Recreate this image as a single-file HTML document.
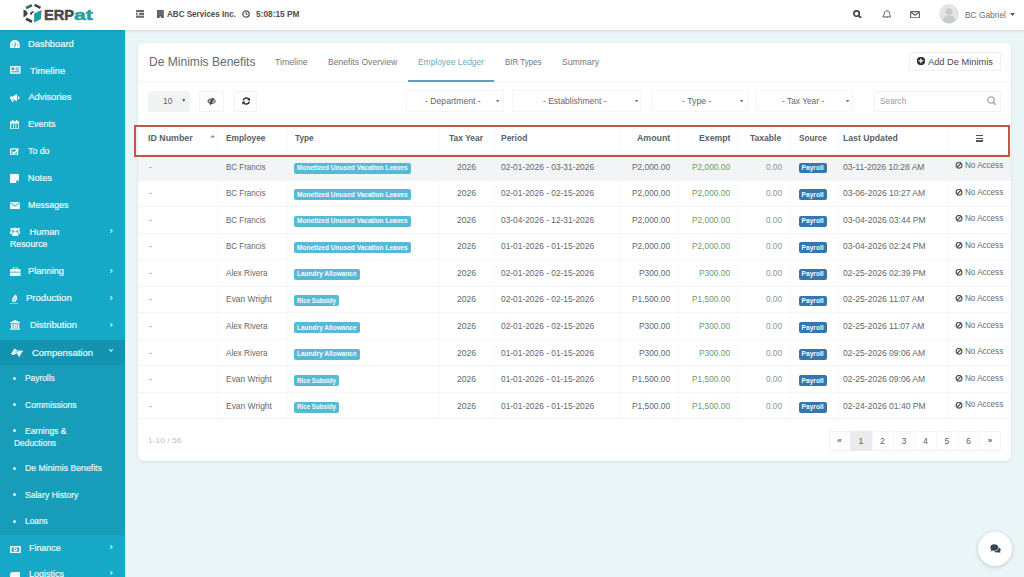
<!DOCTYPE html>
<html><head><meta charset="utf-8"><style>
html,body{margin:0;padding:0;}
body{width:1024px;height:577px;overflow:hidden;position:relative;background:#e9f5f7;font-family:"Liberation Sans",sans-serif;}
.t{position:absolute;white-space:nowrap;line-height:1;transform-origin:0 0;}
.b{position:absolute;}
</style></head><body>
<div class="b" style="left:0.00px;top:0.00px;width:1024.00px;height:30.00px;background:#fff"></div>
<div class="b" style="left:0.00px;top:30.00px;width:125.00px;height:547.00px;background:#16a9c7"></div>
<div class="b" style="left:0.00px;top:365.00px;width:125.00px;height:170.00px;background:#179dba"></div>
<div class="b" style="left:0.00px;top:340.00px;width:125.00px;height:25.00px;background:#1393b0"></div>
<div class="b" style="left:125.00px;top:30.00px;width:1.20px;height:547.00px;background:#cdeef5"></div>
<div class="t" style="left:28.40px;top:39.93px;font-size:9.30px;color:#eef9fb;transform:scaleX(1.0066);-webkit-text-stroke:0.2px #eef9fb;">Dashboard</div>
<div class="t" style="left:29.80px;top:66.93px;font-size:9.30px;color:#eef9fb;transform:scaleX(1.0142);-webkit-text-stroke:0.2px #eef9fb;">Timeline</div>
<div class="t" style="left:28.40px;top:93.43px;font-size:9.30px;color:#eef9fb;-webkit-text-stroke:0.2px #eef9fb;">Advisories</div>
<div class="t" style="left:28.40px;top:120.23px;font-size:9.30px;color:#eef9fb;transform:scaleX(0.9636);-webkit-text-stroke:0.2px #eef9fb;">Events</div>
<div class="t" style="left:28.40px;top:147.33px;font-size:9.30px;color:#eef9fb;transform:scaleX(0.9446);-webkit-text-stroke:0.2px #eef9fb;">To do</div>
<div class="t" style="left:27.70px;top:174.43px;font-size:9.30px;color:#eef9fb;-webkit-text-stroke:0.2px #eef9fb;">Notes</div>
<div class="t" style="left:28.40px;top:201.43px;font-size:9.30px;color:#eef9fb;transform:scaleX(0.9555);-webkit-text-stroke:0.2px #eef9fb;">Messages</div>
<div class="t" style="left:29.50px;top:227.73px;font-size:9.30px;color:#eef9fb;-webkit-text-stroke:0.2px #eef9fb;">Human</div>
<div class="t" style="left:28.40px;top:267.33px;font-size:9.30px;color:#eef9fb;transform:scaleX(0.9945);-webkit-text-stroke:0.2px #eef9fb;">Planning</div>
<div class="t" style="left:26.30px;top:294.33px;font-size:9.30px;color:#eef9fb;transform:scaleX(1.0280);-webkit-text-stroke:0.2px #eef9fb;">Production</div>
<div class="t" style="left:29.50px;top:321.33px;font-size:9.30px;color:#eef9fb;transform:scaleX(1.0102);-webkit-text-stroke:0.2px #eef9fb;">Distribution</div>
<div class="t" style="left:32.40px;top:349.23px;font-size:9.30px;color:#eef9fb;transform:scaleX(1.0156);-webkit-text-stroke:0.2px #eef9fb;">Compensation</div>
<div class="t" style="left:10.40px;top:240.13px;font-size:9.30px;color:#eef9fb;transform:scaleX(0.9396);-webkit-text-stroke:0.2px #eef9fb;">Resource</div>
<div class="t" style="left:24.80px;top:374.45px;font-size:8.80px;color:#e6f5f8;transform:scaleX(0.9519);-webkit-text-stroke:0.2px #e6f5f8;">Payrolls</div>
<div class="b" style="left:13.30px;top:376.90px;width:3.00px;height:3.00px;background:#e3f3f7;border-radius:50%"></div>
<div class="t" style="left:24.90px;top:400.85px;font-size:8.80px;color:#e6f5f8;transform:scaleX(0.9754);-webkit-text-stroke:0.2px #e6f5f8;">Commissions</div>
<div class="b" style="left:13.30px;top:403.30px;width:3.00px;height:3.00px;background:#e3f3f7;border-radius:50%"></div>
<div class="t" style="left:24.90px;top:426.85px;font-size:8.80px;color:#e6f5f8;transform:scaleX(0.9593);-webkit-text-stroke:0.2px #e6f5f8;">Earnings &amp;</div>
<div class="b" style="left:13.30px;top:429.30px;width:3.00px;height:3.00px;background:#e3f3f7;border-radius:50%"></div>
<div class="t" style="left:25.00px;top:464.25px;font-size:8.80px;color:#e6f5f8;transform:scaleX(0.9891);-webkit-text-stroke:0.2px #e6f5f8;">De Minimis Benefits</div>
<div class="b" style="left:13.30px;top:466.70px;width:3.00px;height:3.00px;background:#e3f3f7;border-radius:50%"></div>
<div class="t" style="left:24.90px;top:490.75px;font-size:8.80px;color:#e6f5f8;transform:scaleX(0.9730);-webkit-text-stroke:0.2px #e6f5f8;">Salary History</div>
<div class="b" style="left:13.30px;top:493.20px;width:3.00px;height:3.00px;background:#e3f3f7;border-radius:50%"></div>
<div class="t" style="left:24.90px;top:517.05px;font-size:8.80px;color:#e6f5f8;transform:scaleX(0.9466);-webkit-text-stroke:0.2px #e6f5f8;">Loans</div>
<div class="b" style="left:13.30px;top:519.50px;width:3.00px;height:3.00px;background:#e3f3f7;border-radius:50%"></div>
<div class="t" style="left:13.60px;top:438.65px;font-size:8.80px;color:#e6f5f8;transform:scaleX(0.9541);-webkit-text-stroke:0.2px #e6f5f8;">Deductions</div>
<div class="t" style="left:29.40px;top:543.53px;font-size:9.30px;color:#eef9fb;transform:scaleX(0.9581);-webkit-text-stroke:0.2px #eef9fb;">Finance</div>
<div class="t" style="left:29.40px;top:569.93px;font-size:9.30px;color:#eef9fb;transform:scaleX(0.9675);-webkit-text-stroke:0.2px #eef9fb;">Logistics</div>
<div class="b" style="left:138.00px;top:43.00px;width:873.00px;height:418.00px;background:#fff;border-radius:6px;box-shadow:0 1px 3px rgba(0,40,60,0.1)"></div>
<div class="b" style="left:138.00px;top:80.50px;width:873.00px;height:1.00px;background:#f3f5f6"></div>
<div class="t" style="left:148.50px;top:56.03px;font-size:12.60px;color:#686c70;transform:scaleX(0.9567);">De Minimis Benefits</div>
<div class="t" style="left:275.20px;top:57.65px;font-size:8.80px;color:#74787c;transform:scaleX(0.9929);">Timeline</div>
<div class="t" style="left:328.40px;top:57.65px;font-size:8.80px;color:#74787c;transform:scaleX(0.9767);">Benefits Overview</div>
<div class="t" style="left:417.80px;top:57.65px;font-size:8.80px;color:#64b0bf;transform:scaleX(0.9569);">Employee Ledger</div>
<div class="t" style="left:504.50px;top:57.65px;font-size:8.80px;color:#74787c;transform:scaleX(0.9027);">BIR Types</div>
<div class="t" style="left:562.00px;top:57.65px;font-size:8.80px;color:#74787c;transform:scaleX(0.9829);">Summary</div>
<div class="b" style="left:408.00px;top:80.00px;width:86.00px;height:2.00px;background:#5aa2b5"></div>
<div class="b" style="left:908.80px;top:52.00px;width:92.20px;height:19.20px;border:1px solid #eff0f2;border-radius:1px;box-sizing:border-box;background:#fff"></div>
<div class="b" style="left:917.30px;top:57.00px;width:8.00px;height:8.00px;background:#333;border-radius:50%"></div>
<div class="t" style="left:928.00px;top:56.67px;font-size:9.60px;color:#4a4a4a;transform:scaleX(0.9669);">Add De Minimis</div>
<div class="b" style="left:147.50px;top:90.50px;width:42.00px;height:21.00px;background:#f2f3f5;border-radius:2px"></div>
<div class="t" style="left:163.00px;top:97.30px;font-size:8.50px;color:#666;">10</div>
<div class="b" style="left:199.30px;top:90.50px;width:24.70px;height:21.00px;border:1px solid #f2f3f5;box-sizing:border-box;border-radius:1px"></div>
<div class="b" style="left:234.40px;top:90.50px;width:22.60px;height:21.00px;border:1px solid #f2f3f5;box-sizing:border-box;border-radius:1px"></div>
<div class="b" style="left:406.00px;top:89.50px;width:98.00px;height:22.00px;border:1px solid #f4f5f6;box-sizing:border-box"></div>
<div class="t" style="left:425.40px;top:96.72px;font-size:8.60px;color:#666;transform:scaleX(1.0063);">- Department -</div>
<div class="b" style="left:512.00px;top:89.50px;width:129.00px;height:22.00px;border:1px solid #f4f5f6;box-sizing:border-box"></div>
<div class="t" style="left:543.40px;top:96.72px;font-size:8.60px;color:#666;transform:scaleX(0.9842);">- Establishment -</div>
<div class="b" style="left:650.50px;top:89.50px;width:97.30px;height:22.00px;border:1px solid #f4f5f6;box-sizing:border-box"></div>
<div class="t" style="left:682.00px;top:96.72px;font-size:8.60px;color:#666;transform:scaleX(1.0171);">- Type -</div>
<div class="b" style="left:756.00px;top:89.50px;width:97.30px;height:22.00px;border:1px solid #f4f5f6;box-sizing:border-box"></div>
<div class="t" style="left:781.80px;top:96.72px;font-size:8.60px;color:#666;transform:scaleX(0.9736);">- Tax Year -</div>
<div class="b" style="left:873.50px;top:91.00px;width:127.50px;height:21.00px;border:1px solid #f2f3f5;box-sizing:border-box;border-radius:1px"></div>
<div class="t" style="left:880.00px;top:97.22px;font-size:8.60px;color:#9a9a9a;transform:scaleX(0.9691);">Search</div>
<div class="b" style="left:218.30px;top:126.00px;width:1.00px;height:292.00px;background:#f7f8f9"></div>
<div class="b" style="left:287.00px;top:126.00px;width:1.00px;height:292.00px;background:#f7f8f9"></div>
<div class="b" style="left:438.60px;top:126.00px;width:1.00px;height:292.00px;background:#f7f8f9"></div>
<div class="b" style="left:494.00px;top:126.00px;width:1.00px;height:292.00px;background:#f7f8f9"></div>
<div class="b" style="left:618.60px;top:126.00px;width:1.00px;height:292.00px;background:#f7f8f9"></div>
<div class="b" style="left:677.00px;top:126.00px;width:1.00px;height:292.00px;background:#f7f8f9"></div>
<div class="b" style="left:737.70px;top:126.00px;width:1.00px;height:292.00px;background:#f7f8f9"></div>
<div class="b" style="left:788.50px;top:126.00px;width:1.00px;height:292.00px;background:#f7f8f9"></div>
<div class="b" style="left:837.00px;top:126.00px;width:1.00px;height:292.00px;background:#f7f8f9"></div>
<div class="b" style="left:947.00px;top:126.00px;width:1.00px;height:292.00px;background:#f7f8f9"></div>
<div class="b" style="left:138.00px;top:153.50px;width:873.00px;height:26.50px;background:#f2f4f6"></div>
<div class="b" style="left:138.00px;top:179.50px;width:873.00px;height:1.00px;background:#f3f4f6"></div>
<div class="t" style="left:148.50px;top:162.55px;font-size:8.80px;color:#86898d;transform:scaleX(0.9400);">-</div>
<div class="t" style="left:225.70px;top:162.55px;font-size:8.80px;color:#63676b;transform:scaleX(0.9077);">BC Francis</div>
<div class="b" style="left:294.40px;top:162.50px;width:116.70px;height:11.00px;background:#58b9d7;border-radius:2px"></div>
<div class="t" style="left:297.40px;top:165.11px;font-size:6.60px;color:#f4fbfd;font-weight:bold;transform:scaleX(0.9928);">Monetized Unused Vacation Leaves</div>
<div class="t" style="left:456.70px;top:162.55px;font-size:8.80px;color:#63676b;transform:scaleX(0.9704);">2026</div>
<div class="t" style="left:500.70px;top:162.55px;font-size:8.80px;color:#63676b;transform:scaleX(0.9514);">02-01-2026 - 03-31-2026</div>
<div class="t" style="left:632.18px;top:162.55px;font-size:8.80px;color:#63676b;transform:scaleX(0.9500);">P2,000.00</div>
<div class="t" style="left:691.88px;top:162.55px;font-size:8.80px;color:#6e9c66;transform:scaleX(0.9500);">P2,000.00</div>
<div class="t" style="left:765.60px;top:162.55px;font-size:8.80px;color:#8e9296;transform:scaleX(0.9336);">0.00</div>
<div class="b" style="left:798.60px;top:162.70px;width:28.00px;height:10.80px;background:#3576ad;border-radius:2px"></div>
<div class="t" style="left:801.60px;top:165.11px;font-size:6.60px;color:#f4f8fb;font-weight:bold;">Payroll</div>
<div class="t" style="left:843.10px;top:162.55px;font-size:8.80px;color:#63676b;transform:scaleX(0.9700);">03-11-2026 10:28 AM</div>
<div class="t" style="left:964.60px;top:161.25px;font-size:8.80px;color:#66696d;transform:scaleX(0.9187);">No Access</div>
<svg class="b" style="left:954.50px;top:162.30px;" width="8.00" height="8.00" viewBox="0 0 8 8"><circle cx="4" cy="3.3" r="2.9" fill="none" stroke="#555" stroke-width="1.25"/><path d="M2 5.3 L6 1.3" stroke="#555" stroke-width="1.25"/></svg>
<div class="b" style="left:138.00px;top:206.00px;width:873.00px;height:1.00px;background:#f3f4f6"></div>
<div class="t" style="left:148.50px;top:189.13px;font-size:8.80px;color:#86898d;transform:scaleX(0.9400);">-</div>
<div class="t" style="left:225.70px;top:189.13px;font-size:8.80px;color:#63676b;transform:scaleX(0.9077);">BC Francis</div>
<div class="b" style="left:294.40px;top:189.08px;width:116.70px;height:11.00px;background:#58b9d7;border-radius:2px"></div>
<div class="t" style="left:297.40px;top:191.69px;font-size:6.60px;color:#f4fbfd;font-weight:bold;transform:scaleX(0.9928);">Monetized Unused Vacation Leaves</div>
<div class="t" style="left:456.70px;top:189.13px;font-size:8.80px;color:#63676b;transform:scaleX(0.9704);">2026</div>
<div class="t" style="left:500.70px;top:189.13px;font-size:8.80px;color:#63676b;transform:scaleX(0.9514);">02-01-2026 - 02-15-2026</div>
<div class="t" style="left:632.18px;top:189.13px;font-size:8.80px;color:#63676b;transform:scaleX(0.9500);">P2,000.00</div>
<div class="t" style="left:691.88px;top:189.13px;font-size:8.80px;color:#6e9c66;transform:scaleX(0.9500);">P2,000.00</div>
<div class="t" style="left:765.60px;top:189.13px;font-size:8.80px;color:#8e9296;transform:scaleX(0.9336);">0.00</div>
<div class="b" style="left:798.60px;top:189.28px;width:28.00px;height:10.80px;background:#3576ad;border-radius:2px"></div>
<div class="t" style="left:801.60px;top:191.69px;font-size:6.60px;color:#f4f8fb;font-weight:bold;">Payroll</div>
<div class="t" style="left:843.10px;top:189.13px;font-size:8.80px;color:#63676b;transform:scaleX(0.9700);">03-06-2026 10:27 AM</div>
<div class="t" style="left:964.60px;top:187.83px;font-size:8.80px;color:#66696d;transform:scaleX(0.9187);">No Access</div>
<svg class="b" style="left:954.50px;top:188.88px;" width="8.00" height="8.00" viewBox="0 0 8 8"><circle cx="4" cy="3.3" r="2.9" fill="none" stroke="#555" stroke-width="1.25"/><path d="M2 5.3 L6 1.3" stroke="#555" stroke-width="1.25"/></svg>
<div class="b" style="left:138.00px;top:232.50px;width:873.00px;height:1.00px;background:#f3f4f6"></div>
<div class="t" style="left:148.50px;top:215.71px;font-size:8.80px;color:#86898d;transform:scaleX(0.9400);">-</div>
<div class="t" style="left:225.70px;top:215.71px;font-size:8.80px;color:#63676b;transform:scaleX(0.9077);">BC Francis</div>
<div class="b" style="left:294.40px;top:215.66px;width:116.70px;height:11.00px;background:#58b9d7;border-radius:2px"></div>
<div class="t" style="left:297.40px;top:218.27px;font-size:6.60px;color:#f4fbfd;font-weight:bold;transform:scaleX(0.9928);">Monetized Unused Vacation Leaves</div>
<div class="t" style="left:456.70px;top:215.71px;font-size:8.80px;color:#63676b;transform:scaleX(0.9704);">2026</div>
<div class="t" style="left:500.70px;top:215.71px;font-size:8.80px;color:#63676b;transform:scaleX(0.9514);">03-04-2026 - 12-31-2026</div>
<div class="t" style="left:632.18px;top:215.71px;font-size:8.80px;color:#63676b;transform:scaleX(0.9500);">P2,000.00</div>
<div class="t" style="left:691.88px;top:215.71px;font-size:8.80px;color:#6e9c66;transform:scaleX(0.9500);">P2,000.00</div>
<div class="t" style="left:765.60px;top:215.71px;font-size:8.80px;color:#8e9296;transform:scaleX(0.9336);">0.00</div>
<div class="b" style="left:798.60px;top:215.86px;width:28.00px;height:10.80px;background:#3576ad;border-radius:2px"></div>
<div class="t" style="left:801.60px;top:218.27px;font-size:6.60px;color:#f4f8fb;font-weight:bold;">Payroll</div>
<div class="t" style="left:843.10px;top:215.71px;font-size:8.80px;color:#63676b;transform:scaleX(0.9700);">03-04-2026 03:44 PM</div>
<div class="t" style="left:964.60px;top:214.41px;font-size:8.80px;color:#66696d;transform:scaleX(0.9187);">No Access</div>
<svg class="b" style="left:954.50px;top:215.46px;" width="8.00" height="8.00" viewBox="0 0 8 8"><circle cx="4" cy="3.3" r="2.9" fill="none" stroke="#555" stroke-width="1.25"/><path d="M2 5.3 L6 1.3" stroke="#555" stroke-width="1.25"/></svg>
<div class="b" style="left:138.00px;top:259.00px;width:873.00px;height:1.00px;background:#f3f4f6"></div>
<div class="t" style="left:148.50px;top:242.29px;font-size:8.80px;color:#86898d;transform:scaleX(0.9400);">-</div>
<div class="t" style="left:225.70px;top:242.29px;font-size:8.80px;color:#63676b;transform:scaleX(0.9077);">BC Francis</div>
<div class="b" style="left:294.40px;top:242.24px;width:116.70px;height:11.00px;background:#58b9d7;border-radius:2px"></div>
<div class="t" style="left:297.40px;top:244.85px;font-size:6.60px;color:#f4fbfd;font-weight:bold;transform:scaleX(0.9928);">Monetized Unused Vacation Leaves</div>
<div class="t" style="left:456.70px;top:242.29px;font-size:8.80px;color:#63676b;transform:scaleX(0.9704);">2026</div>
<div class="t" style="left:500.70px;top:242.29px;font-size:8.80px;color:#63676b;transform:scaleX(0.9514);">01-01-2026 - 01-15-2026</div>
<div class="t" style="left:632.18px;top:242.29px;font-size:8.80px;color:#63676b;transform:scaleX(0.9500);">P2,000.00</div>
<div class="t" style="left:691.88px;top:242.29px;font-size:8.80px;color:#6e9c66;transform:scaleX(0.9500);">P2,000.00</div>
<div class="t" style="left:765.60px;top:242.29px;font-size:8.80px;color:#8e9296;transform:scaleX(0.9336);">0.00</div>
<div class="b" style="left:798.60px;top:242.44px;width:28.00px;height:10.80px;background:#3576ad;border-radius:2px"></div>
<div class="t" style="left:801.60px;top:244.85px;font-size:6.60px;color:#f4f8fb;font-weight:bold;">Payroll</div>
<div class="t" style="left:843.10px;top:242.29px;font-size:8.80px;color:#63676b;transform:scaleX(0.9700);">03-04-2026 02:24 PM</div>
<div class="t" style="left:964.60px;top:240.99px;font-size:8.80px;color:#66696d;transform:scaleX(0.9187);">No Access</div>
<svg class="b" style="left:954.50px;top:242.04px;" width="8.00" height="8.00" viewBox="0 0 8 8"><circle cx="4" cy="3.3" r="2.9" fill="none" stroke="#555" stroke-width="1.25"/><path d="M2 5.3 L6 1.3" stroke="#555" stroke-width="1.25"/></svg>
<div class="b" style="left:138.00px;top:285.50px;width:873.00px;height:1.00px;background:#f3f4f6"></div>
<div class="t" style="left:148.50px;top:268.87px;font-size:8.80px;color:#86898d;transform:scaleX(0.9400);">-</div>
<div class="t" style="left:225.70px;top:268.87px;font-size:8.80px;color:#63676b;transform:scaleX(0.9242);">Alex Rivera</div>
<div class="b" style="left:294.40px;top:268.82px;width:65.70px;height:11.00px;background:#58b9d7;border-radius:2px"></div>
<div class="t" style="left:297.40px;top:271.43px;font-size:6.60px;color:#f4fbfd;font-weight:bold;transform:scaleX(0.9905);">Laundry Allowance</div>
<div class="t" style="left:456.70px;top:268.87px;font-size:8.80px;color:#63676b;transform:scaleX(0.9704);">2026</div>
<div class="t" style="left:500.70px;top:268.87px;font-size:8.80px;color:#63676b;transform:scaleX(0.9514);">02-01-2026 - 02-15-2026</div>
<div class="t" style="left:639.16px;top:268.87px;font-size:8.80px;color:#63676b;transform:scaleX(0.9500);">P300.00</div>
<div class="t" style="left:698.86px;top:268.87px;font-size:8.80px;color:#6e9c66;transform:scaleX(0.9500);">P300.00</div>
<div class="t" style="left:765.60px;top:268.87px;font-size:8.80px;color:#8e9296;transform:scaleX(0.9336);">0.00</div>
<div class="b" style="left:798.60px;top:269.02px;width:28.00px;height:10.80px;background:#3576ad;border-radius:2px"></div>
<div class="t" style="left:801.60px;top:271.43px;font-size:6.60px;color:#f4f8fb;font-weight:bold;">Payroll</div>
<div class="t" style="left:843.10px;top:268.87px;font-size:8.80px;color:#63676b;transform:scaleX(0.9700);">02-25-2026 02:39 PM</div>
<div class="t" style="left:964.60px;top:267.57px;font-size:8.80px;color:#66696d;transform:scaleX(0.9187);">No Access</div>
<svg class="b" style="left:954.50px;top:268.62px;" width="8.00" height="8.00" viewBox="0 0 8 8"><circle cx="4" cy="3.3" r="2.9" fill="none" stroke="#555" stroke-width="1.25"/><path d="M2 5.3 L6 1.3" stroke="#555" stroke-width="1.25"/></svg>
<div class="b" style="left:138.00px;top:312.00px;width:873.00px;height:1.00px;background:#f3f4f6"></div>
<div class="t" style="left:148.50px;top:295.45px;font-size:8.80px;color:#86898d;transform:scaleX(0.9400);">-</div>
<div class="t" style="left:225.70px;top:295.45px;font-size:8.80px;color:#63676b;transform:scaleX(0.9610);">Evan Wright</div>
<div class="b" style="left:294.40px;top:295.40px;width:45.00px;height:11.00px;background:#58b9d7;border-radius:2px"></div>
<div class="t" style="left:297.40px;top:298.01px;font-size:6.60px;color:#f4fbfd;font-weight:bold;transform:scaleX(0.9409);">Rice Subsidy</div>
<div class="t" style="left:456.70px;top:295.45px;font-size:8.80px;color:#63676b;transform:scaleX(0.9704);">2026</div>
<div class="t" style="left:500.70px;top:295.45px;font-size:8.80px;color:#63676b;transform:scaleX(0.9514);">02-01-2026 - 02-15-2026</div>
<div class="t" style="left:632.18px;top:295.45px;font-size:8.80px;color:#63676b;transform:scaleX(0.9500);">P1,500.00</div>
<div class="t" style="left:691.88px;top:295.45px;font-size:8.80px;color:#6e9c66;transform:scaleX(0.9500);">P1,500.00</div>
<div class="t" style="left:765.60px;top:295.45px;font-size:8.80px;color:#8e9296;transform:scaleX(0.9336);">0.00</div>
<div class="b" style="left:798.60px;top:295.60px;width:28.00px;height:10.80px;background:#3576ad;border-radius:2px"></div>
<div class="t" style="left:801.60px;top:298.01px;font-size:6.60px;color:#f4f8fb;font-weight:bold;">Payroll</div>
<div class="t" style="left:843.10px;top:295.45px;font-size:8.80px;color:#63676b;transform:scaleX(0.9700);">02-25-2026 11:07 AM</div>
<div class="t" style="left:964.60px;top:294.15px;font-size:8.80px;color:#66696d;transform:scaleX(0.9187);">No Access</div>
<svg class="b" style="left:954.50px;top:295.20px;" width="8.00" height="8.00" viewBox="0 0 8 8"><circle cx="4" cy="3.3" r="2.9" fill="none" stroke="#555" stroke-width="1.25"/><path d="M2 5.3 L6 1.3" stroke="#555" stroke-width="1.25"/></svg>
<div class="b" style="left:138.00px;top:338.50px;width:873.00px;height:1.00px;background:#f3f4f6"></div>
<div class="t" style="left:148.50px;top:322.03px;font-size:8.80px;color:#86898d;transform:scaleX(0.9400);">-</div>
<div class="t" style="left:225.70px;top:322.03px;font-size:8.80px;color:#63676b;transform:scaleX(0.9242);">Alex Rivera</div>
<div class="b" style="left:294.40px;top:321.98px;width:65.70px;height:11.00px;background:#58b9d7;border-radius:2px"></div>
<div class="t" style="left:297.40px;top:324.59px;font-size:6.60px;color:#f4fbfd;font-weight:bold;transform:scaleX(0.9905);">Laundry Allowance</div>
<div class="t" style="left:456.70px;top:322.03px;font-size:8.80px;color:#63676b;transform:scaleX(0.9704);">2026</div>
<div class="t" style="left:500.70px;top:322.03px;font-size:8.80px;color:#63676b;transform:scaleX(0.9514);">02-01-2026 - 02-15-2026</div>
<div class="t" style="left:639.16px;top:322.03px;font-size:8.80px;color:#63676b;transform:scaleX(0.9500);">P300.00</div>
<div class="t" style="left:698.86px;top:322.03px;font-size:8.80px;color:#6e9c66;transform:scaleX(0.9500);">P300.00</div>
<div class="t" style="left:765.60px;top:322.03px;font-size:8.80px;color:#8e9296;transform:scaleX(0.9336);">0.00</div>
<div class="b" style="left:798.60px;top:322.18px;width:28.00px;height:10.80px;background:#3576ad;border-radius:2px"></div>
<div class="t" style="left:801.60px;top:324.59px;font-size:6.60px;color:#f4f8fb;font-weight:bold;">Payroll</div>
<div class="t" style="left:843.10px;top:322.03px;font-size:8.80px;color:#63676b;transform:scaleX(0.9700);">02-25-2026 11:07 AM</div>
<div class="t" style="left:964.60px;top:320.73px;font-size:8.80px;color:#66696d;transform:scaleX(0.9187);">No Access</div>
<svg class="b" style="left:954.50px;top:321.78px;" width="8.00" height="8.00" viewBox="0 0 8 8"><circle cx="4" cy="3.3" r="2.9" fill="none" stroke="#555" stroke-width="1.25"/><path d="M2 5.3 L6 1.3" stroke="#555" stroke-width="1.25"/></svg>
<div class="b" style="left:138.00px;top:365.00px;width:873.00px;height:1.00px;background:#f3f4f6"></div>
<div class="t" style="left:148.50px;top:348.61px;font-size:8.80px;color:#86898d;transform:scaleX(0.9400);">-</div>
<div class="t" style="left:225.70px;top:348.61px;font-size:8.80px;color:#63676b;transform:scaleX(0.9242);">Alex Rivera</div>
<div class="b" style="left:294.40px;top:348.56px;width:65.70px;height:11.00px;background:#58b9d7;border-radius:2px"></div>
<div class="t" style="left:297.40px;top:351.17px;font-size:6.60px;color:#f4fbfd;font-weight:bold;transform:scaleX(0.9905);">Laundry Allowance</div>
<div class="t" style="left:456.70px;top:348.61px;font-size:8.80px;color:#63676b;transform:scaleX(0.9704);">2026</div>
<div class="t" style="left:500.70px;top:348.61px;font-size:8.80px;color:#63676b;transform:scaleX(0.9514);">01-01-2026 - 01-15-2026</div>
<div class="t" style="left:639.16px;top:348.61px;font-size:8.80px;color:#63676b;transform:scaleX(0.9500);">P300.00</div>
<div class="t" style="left:698.86px;top:348.61px;font-size:8.80px;color:#6e9c66;transform:scaleX(0.9500);">P300.00</div>
<div class="t" style="left:765.60px;top:348.61px;font-size:8.80px;color:#8e9296;transform:scaleX(0.9336);">0.00</div>
<div class="b" style="left:798.60px;top:348.76px;width:28.00px;height:10.80px;background:#3576ad;border-radius:2px"></div>
<div class="t" style="left:801.60px;top:351.17px;font-size:6.60px;color:#f4f8fb;font-weight:bold;">Payroll</div>
<div class="t" style="left:843.10px;top:348.61px;font-size:8.80px;color:#63676b;transform:scaleX(0.9700);">02-25-2026 09:06 AM</div>
<div class="t" style="left:964.60px;top:347.31px;font-size:8.80px;color:#66696d;transform:scaleX(0.9187);">No Access</div>
<svg class="b" style="left:954.50px;top:348.36px;" width="8.00" height="8.00" viewBox="0 0 8 8"><circle cx="4" cy="3.3" r="2.9" fill="none" stroke="#555" stroke-width="1.25"/><path d="M2 5.3 L6 1.3" stroke="#555" stroke-width="1.25"/></svg>
<div class="b" style="left:138.00px;top:391.50px;width:873.00px;height:1.00px;background:#f3f4f6"></div>
<div class="t" style="left:148.50px;top:375.19px;font-size:8.80px;color:#86898d;transform:scaleX(0.9400);">-</div>
<div class="t" style="left:225.70px;top:375.19px;font-size:8.80px;color:#63676b;transform:scaleX(0.9610);">Evan Wright</div>
<div class="b" style="left:294.40px;top:375.14px;width:45.00px;height:11.00px;background:#58b9d7;border-radius:2px"></div>
<div class="t" style="left:297.40px;top:377.75px;font-size:6.60px;color:#f4fbfd;font-weight:bold;transform:scaleX(0.9409);">Rice Subsidy</div>
<div class="t" style="left:456.70px;top:375.19px;font-size:8.80px;color:#63676b;transform:scaleX(0.9704);">2026</div>
<div class="t" style="left:500.70px;top:375.19px;font-size:8.80px;color:#63676b;transform:scaleX(0.9514);">01-01-2026 - 01-15-2026</div>
<div class="t" style="left:632.18px;top:375.19px;font-size:8.80px;color:#63676b;transform:scaleX(0.9500);">P1,500.00</div>
<div class="t" style="left:691.88px;top:375.19px;font-size:8.80px;color:#6e9c66;transform:scaleX(0.9500);">P1,500.00</div>
<div class="t" style="left:765.60px;top:375.19px;font-size:8.80px;color:#8e9296;transform:scaleX(0.9336);">0.00</div>
<div class="b" style="left:798.60px;top:375.34px;width:28.00px;height:10.80px;background:#3576ad;border-radius:2px"></div>
<div class="t" style="left:801.60px;top:377.75px;font-size:6.60px;color:#f4f8fb;font-weight:bold;">Payroll</div>
<div class="t" style="left:843.10px;top:375.19px;font-size:8.80px;color:#63676b;transform:scaleX(0.9700);">02-25-2026 09:06 AM</div>
<div class="t" style="left:964.60px;top:373.89px;font-size:8.80px;color:#66696d;transform:scaleX(0.9187);">No Access</div>
<svg class="b" style="left:954.50px;top:374.94px;" width="8.00" height="8.00" viewBox="0 0 8 8"><circle cx="4" cy="3.3" r="2.9" fill="none" stroke="#555" stroke-width="1.25"/><path d="M2 5.3 L6 1.3" stroke="#555" stroke-width="1.25"/></svg>
<div class="b" style="left:138.00px;top:418.00px;width:873.00px;height:1.00px;background:#f3f4f6"></div>
<div class="t" style="left:148.50px;top:401.77px;font-size:8.80px;color:#86898d;transform:scaleX(0.9400);">-</div>
<div class="t" style="left:225.70px;top:401.77px;font-size:8.80px;color:#63676b;transform:scaleX(0.9610);">Evan Wright</div>
<div class="b" style="left:294.40px;top:401.72px;width:45.00px;height:11.00px;background:#58b9d7;border-radius:2px"></div>
<div class="t" style="left:297.40px;top:404.33px;font-size:6.60px;color:#f4fbfd;font-weight:bold;transform:scaleX(0.9409);">Rice Subsidy</div>
<div class="t" style="left:456.70px;top:401.77px;font-size:8.80px;color:#63676b;transform:scaleX(0.9704);">2026</div>
<div class="t" style="left:500.70px;top:401.77px;font-size:8.80px;color:#63676b;transform:scaleX(0.9514);">01-01-2026 - 01-15-2026</div>
<div class="t" style="left:632.18px;top:401.77px;font-size:8.80px;color:#63676b;transform:scaleX(0.9500);">P1,500.00</div>
<div class="t" style="left:691.88px;top:401.77px;font-size:8.80px;color:#6e9c66;transform:scaleX(0.9500);">P1,500.00</div>
<div class="t" style="left:765.60px;top:401.77px;font-size:8.80px;color:#8e9296;transform:scaleX(0.9336);">0.00</div>
<div class="b" style="left:798.60px;top:401.92px;width:28.00px;height:10.80px;background:#3576ad;border-radius:2px"></div>
<div class="t" style="left:801.60px;top:404.33px;font-size:6.60px;color:#f4f8fb;font-weight:bold;">Payroll</div>
<div class="t" style="left:843.10px;top:401.77px;font-size:8.80px;color:#63676b;transform:scaleX(0.9700);">02-24-2026 01:40 PM</div>
<div class="t" style="left:964.60px;top:400.47px;font-size:8.80px;color:#66696d;transform:scaleX(0.9187);">No Access</div>
<svg class="b" style="left:954.50px;top:401.52px;" width="8.00" height="8.00" viewBox="0 0 8 8"><circle cx="4" cy="3.3" r="2.9" fill="none" stroke="#555" stroke-width="1.25"/><path d="M2 5.3 L6 1.3" stroke="#555" stroke-width="1.25"/></svg>
<div class="t" style="left:148.20px;top:133.58px;font-size:9.00px;color:#5a5f63;font-weight:bold;transform:scaleX(0.9820);">ID Number</div>
<div class="t" style="left:225.70px;top:133.58px;font-size:9.00px;color:#5a5f63;font-weight:bold;transform:scaleX(0.9289);">Employee</div>
<div class="t" style="left:295.00px;top:133.58px;font-size:9.00px;color:#5a5f63;font-weight:bold;transform:scaleX(0.9145);">Type</div>
<div class="t" style="left:448.90px;top:133.58px;font-size:9.00px;color:#5a5f63;font-weight:bold;transform:scaleX(0.9392);">Tax Year</div>
<div class="t" style="left:500.70px;top:133.58px;font-size:9.00px;color:#5a5f63;font-weight:bold;transform:scaleX(0.9389);">Period</div>
<div class="t" style="left:637.10px;top:133.58px;font-size:9.00px;color:#5a5f63;font-weight:bold;transform:scaleX(0.9765);">Amount</div>
<div class="t" style="left:698.60px;top:133.58px;font-size:9.00px;color:#5a5f63;font-weight:bold;transform:scaleX(0.9658);">Exempt</div>
<div class="t" style="left:750.40px;top:133.58px;font-size:9.00px;color:#5a5f63;font-weight:bold;transform:scaleX(0.9498);">Taxable</div>
<div class="t" style="left:798.60px;top:133.58px;font-size:9.00px;color:#5a5f63;font-weight:bold;transform:scaleX(0.9145);">Source</div>
<div class="t" style="left:843.10px;top:133.58px;font-size:9.00px;color:#5a5f63;font-weight:bold;transform:scaleX(0.9629);">Last Updated</div>
<div class="b" style="left:975.60px;top:135.00px;width:7.40px;height:1.40px;background:#555"></div>
<div class="b" style="left:975.60px;top:137.60px;width:7.40px;height:1.40px;background:#555"></div>
<div class="b" style="left:975.60px;top:140.20px;width:7.40px;height:1.40px;background:#555"></div>
<div class="b" style="left:133.50px;top:124.50px;width:876.50px;height:32.50px;border:2px solid #c45548;box-sizing:border-box"></div>
<div class="t" style="left:148.00px;top:437.23px;font-size:8.00px;color:#bcc0c3;transform:scaleX(1.0608);">1-10 / 56</div>
<div class="b" style="left:828.80px;top:430.60px;width:172.00px;height:20.50px;border:1px solid #f2f3f5;box-sizing:border-box;border-radius:2px"></div>
<div class="b" style="left:850.30px;top:430.60px;width:1.00px;height:20.50px;background:#f5f6f7"></div>
<div class="b" style="left:871.80px;top:430.60px;width:1.00px;height:20.50px;background:#f5f6f7"></div>
<div class="b" style="left:893.30px;top:430.60px;width:1.00px;height:20.50px;background:#f5f6f7"></div>
<div class="b" style="left:914.80px;top:430.60px;width:1.00px;height:20.50px;background:#f5f6f7"></div>
<div class="b" style="left:936.30px;top:430.60px;width:1.00px;height:20.50px;background:#f5f6f7"></div>
<div class="b" style="left:957.80px;top:430.60px;width:1.00px;height:20.50px;background:#f5f6f7"></div>
<div class="b" style="left:979.30px;top:430.60px;width:1.00px;height:20.50px;background:#f5f6f7"></div>
<div class="b" style="left:850.30px;top:430.60px;width:21.50px;height:20.50px;background:#e9ebee"></div>
<div class="t" style="left:837.33px;top:437.43px;font-size:8.00px;color:#5f6367;font-weight:bold;">«</div>
<div class="t" style="left:858.61px;top:437.15px;font-size:8.80px;color:#5f6367;">1</div>
<div class="t" style="left:880.11px;top:437.15px;font-size:8.80px;color:#5f6367;">2</div>
<div class="t" style="left:901.61px;top:437.15px;font-size:8.80px;color:#5f6367;">3</div>
<div class="t" style="left:923.11px;top:437.15px;font-size:8.80px;color:#5f6367;">4</div>
<div class="t" style="left:944.61px;top:437.15px;font-size:8.80px;color:#5f6367;">5</div>
<div class="t" style="left:966.11px;top:437.15px;font-size:8.80px;color:#5f6367;">6</div>
<div class="t" style="left:987.83px;top:437.43px;font-size:8.00px;color:#5f6367;font-weight:bold;">»</div>
<div class="b" style="left:978.00px;top:531.50px;width:34.00px;height:34.00px;background:#fff;border-radius:50%;box-shadow:0 1px 4px rgba(0,0,0,0.18)"></div>
<svg class="b" style="left:20.80px;top:1.40px;" width="26.00" height="26.00" viewBox="0 0 26 26"><g stroke-linecap="butt"><path d="M5 6.9 L11 4.2" stroke="#3b6b6e" stroke-width="2.7"/><path d="M13.6 3.9 L19.5 6.9" stroke="#40454a" stroke-width="2.7"/><path d="M5 17.7 L11 20.8" stroke="#40454a" stroke-width="2.7"/></g><path d="M2.5 8.5 L5.2 9.8 L6.8 12.3 L5.2 14.9 L2.5 16.2Z" fill="#40454a"/><path d="M9.2 11.4 L12.4 9.8 L12.7 11.6 L11 12.4 L10.6 14 L9.1 13.4Z" fill="#40454a"/><path d="M13.1 12.6 L20.6 9.1 L19.9 18.1 L13.1 21.7Z" fill="#1f9c9f"/></svg>
<div class="t" style="left:43.80px;top:6.50px;font-size:15.00px;color:#454a4f;font-weight:bold;transform:scaleX(0.9765);-webkit-text-stroke:0.5px #454a4f;">ERP</div>
<div class="t" style="left:74.40px;top:6.50px;font-size:15.00px;color:#26a09f;font-weight:bold;transform:scaleX(1.4232);-webkit-text-stroke:0.5px #26a09f;">at</div>
<svg class="b" style="left:135.50px;top:9.90px;" width="8.80" height="7.80" viewBox="0 0 8.8 7.8"><rect x="0" y="0" width="8.8" height="2.2" fill="#6d6d6d"/><rect x="3.2" y="2.8" width="5.6" height="2.2" fill="#6d6d6d"/><rect x="0" y="5.6" width="8.8" height="2.2" fill="#6d6d6d"/><path d="M0 2.6 L2.4 3.9 L0 5.2Z" fill="#6d6d6d"/></svg>
<svg class="b" style="left:157.00px;top:9.90px;" width="6.80" height="8.20" viewBox="0 0 6.8 8.2"><path d="M0 0 H6.8 V8.2 H4.2 V6.6 H2.6 V8.2 H0 Z" fill="#5a5a5a"/><rect x="1.4" y="1.3" width="1.2" height="1.1" fill="#9a9a9a"/><rect x="4.2" y="1.3" width="1.2" height="1.1" fill="#9a9a9a"/><rect x="1.4" y="3.6" width="1.2" height="1.1" fill="#9a9a9a"/><rect x="4.2" y="3.6" width="1.2" height="1.1" fill="#9a9a9a"/></svg>
<div class="t" style="left:166.70px;top:9.22px;font-size:9.90px;color:#4d4d4d;font-weight:bold;transform:scaleX(0.8154);">ABC Services Inc.</div>
<svg class="b" style="left:242.30px;top:10.00px;" width="8.00" height="8.00" viewBox="0 0 8 8"><circle cx="4" cy="4" r="3.2" fill="none" stroke="#5a5a5a" stroke-width="1.3"/><path d="M4 2 V4.3 H5.6" fill="none" stroke="#5a5a5a" stroke-width="1.1"/></svg>
<div class="t" style="left:255.90px;top:9.22px;font-size:9.90px;color:#4d4d4d;font-weight:bold;transform:scaleX(0.8429);">5:08:15 PM</div>
<svg class="b" style="left:853.30px;top:10.20px;" width="8.80" height="8.20" viewBox="0 0 8.8 8.2"><circle cx="3.6" cy="3.6" r="2.7" fill="none" stroke="#3d3d3d" stroke-width="1.6"/><path d="M5.6 5.6 L8.2 8" stroke="#3d3d3d" stroke-width="1.8"/></svg>
<svg class="b" style="left:881.60px;top:9.80px;" width="9.80" height="8.60" viewBox="0 0 9.8 8.6"><path d="M4.9 0.8 C2.6 0.8 2.1 2.8 2.1 4.4 C2.1 5.6 1.2 6.3 0.8 6.9 H9 C8.6 6.3 7.7 5.6 7.7 4.4 C7.7 2.8 7.2 0.8 4.9 0.8 Z" fill="none" stroke="#5d5d5d" stroke-width="1"/><path d="M3.9 7.6 A1 1 0 0 0 5.9 7.6" fill="#5d5d5d"/></svg>
<svg class="b" style="left:910.00px;top:10.80px;" width="10.00" height="7.40" viewBox="0 0 10 7.4"><rect x="0.6" y="0.6" width="8.8" height="6.2" rx="0.6" fill="none" stroke="#5d5d5d" stroke-width="1.1"/><path d="M0.8 1 L5 4.2 L9.2 1" fill="none" stroke="#5d5d5d" stroke-width="1.1"/></svg>
<svg class="b" style="left:939.00px;top:3.80px;" width="20.00" height="20.00" viewBox="0 0 20 20"><circle cx="10" cy="10" r="10" fill="#e3e4e6"/><circle cx="10" cy="7.6" r="3.4" fill="#c9cacc"/><path d="M3.8 16.5 C4.5 12.6 7 11.6 10 11.6 C13 11.6 15.5 12.6 16.2 16.5 C14.6 18.2 12.5 19.2 10 19.2 C7.5 19.2 5.4 18.2 3.8 16.5Z" fill="#c9cacc"/></svg>
<div class="t" style="left:965.00px;top:9.64px;font-size:9.40px;color:#6d6d6d;transform:scaleX(0.8920);">BC Gabriel</div>
<svg class="b" style="left:1009.50px;top:12.60px;" width="5.00" height="3.00" viewBox="0 0 5 3"><path d="M0 0 H5 L2.5 3Z" fill="#555"/></svg>
<svg class="b" style="left:9.90px;top:39.90px;" width="9.70" height="8.00" viewBox="0 0 9.7 8"><path d="M0 8 V4.6 A4.85 4.6 0 0 1 9.7 4.6 V8 Z" fill="#f0fafc"/><path d="M4.6 7.4 L5.6 3" stroke="#16a9c7" stroke-width="1"/><circle cx="2.2" cy="4.6" r="0.55" fill="#16a9c7"/><circle cx="7.5" cy="4.6" r="0.55" fill="#16a9c7"/><circle cx="4.85" cy="1.8" r="0.55" fill="#16a9c7"/></svg>
<svg class="b" style="left:10.20px;top:66.20px;" width="10.60" height="7.80" viewBox="0 0 10.6 7.8"><rect x="0" y="0" width="10.6" height="7.8" rx="0.8" fill="#f0fafc"/><rect x="1.4" y="1.5" width="3" height="2.4" fill="#16a9c7"/><rect x="5.6" y="1.5" width="3.6" height="1" fill="#16a9c7"/><rect x="5.6" y="3.4" width="3.6" height="1" fill="#16a9c7"/><rect x="1.4" y="5.3" width="7.8" height="1" fill="#16a9c7"/></svg>
<svg class="b" style="left:10.30px;top:93.50px;" width="9.40" height="8.00" viewBox="0 0 9.4 8"><path d="M0 2.6 H2.6 L7 0 V7.2 L2.6 4.9 H0Z" fill="#f0fafc"/><path d="M1 4.9 L2.2 8 H3.6 L2.8 4.9Z" fill="#f0fafc"/><rect x="7.8" y="2.4" width="1.5" height="2.8" fill="#f0fafc"/></svg>
<svg class="b" style="left:10.00px;top:119.80px;" width="9.40" height="9.60" viewBox="0 0 9.4 9.6"><rect x="0" y="1.2" width="9.4" height="8.4" rx="0.8" fill="#f0fafc"/><rect x="1.2" y="3.6" width="7" height="4.8" fill="#16a9c7"/><rect x="2" y="0" width="1.3" height="2.2" fill="#f0fafc"/><rect x="6.1" y="0" width="1.3" height="2.2" fill="#f0fafc"/><path d="M3.4 3.6V8.4M5.9 3.6V8.4" stroke="#f0fafc" stroke-width="0.9"/></svg>
<svg class="b" style="left:10.00px;top:147.60px;" width="9.00" height="7.60" viewBox="0 0 9 7.6"><rect x="0.7" y="0.9" width="6.8" height="6" rx="0.6" fill="none" stroke="#f0fafc" stroke-width="1.3"/><path d="M2.2 3.6 L4 5.4 L8.6 0.8" fill="none" stroke="#f0fafc" stroke-width="1.5"/></svg>
<svg class="b" style="left:10.00px;top:173.80px;" width="9.00" height="9.40" viewBox="0 0 9 9.4"><path d="M0 0 H9 V6.4 L6 9.4 H0Z" fill="#f0fafc"/><path d="M6.2 9.4 V6.6 H9" fill="#16a9c7"/></svg>
<svg class="b" style="left:10.00px;top:201.60px;" width="9.80" height="7.80" viewBox="0 0 9.8 7.8"><rect x="0" y="0" width="9.8" height="7.8" rx="0.6" fill="#f0fafc"/><path d="M0.2 0.8 L4.9 4.2 L9.6 0.8" fill="none" stroke="#16a9c7" stroke-width="1"/></svg>
<svg class="b" style="left:9.80px;top:226.80px;" width="10.40" height="9.60" viewBox="0 0 10.4 9.6"><circle cx="5.2" cy="2.7" r="2.1" fill="#f0fafc"/><circle cx="1.9" cy="2.2" r="1.5" fill="#f0fafc"/><circle cx="8.5" cy="2.2" r="1.5" fill="#f0fafc"/><path d="M2.1 9.6 V6.8 C2.1 5.4 3.5 4.9 5.2 4.9 C6.9 4.9 8.3 5.4 8.3 6.8 V9.6Z" fill="#f0fafc"/><path d="M0 7 V4.8 C0.3 4.2 1.2 4 2.4 4.2 L1.6 7Z" fill="#f0fafc"/><path d="M10.4 7 V4.8 C10.1 4.2 9.2 4 8 4.2 L8.8 7Z" fill="#f0fafc"/></svg>
<svg class="b" style="left:10.00px;top:266.80px;" width="10.60" height="9.60" viewBox="0 0 10.6 9.6"><rect x="0" y="2" width="10.6" height="7.6" rx="1" fill="#f0fafc"/><rect x="3.4" y="0" width="3.8" height="2.4" rx="0.5" fill="none" stroke="#f0fafc" stroke-width="0.9"/><path d="M0 5.2 H10.6" stroke="#16a9c7" stroke-width="0.7"/><rect x="4.5" y="4.4" width="1.6" height="1.6" fill="#e0a0a0"/></svg>
<svg class="b" style="left:10.00px;top:293.50px;" width="8.40" height="10.90" viewBox="0 0 8.4 10.9"><path d="M5.6 0.4 C7.8 2.5 7.6 6.4 4.6 8 L2.5 8 C1.2 6.2 2.5 3 5.6 0.4Z" fill="#f0fafc"/><path d="M3.2 7.6 L5.3 3.4" stroke="#16a9c7" stroke-width="0.7"/><rect x="0" y="9.5" width="8.4" height="1.3" fill="#f0fafc"/></svg>
<svg class="b" style="left:9.80px;top:320.20px;" width="10.20" height="9.70" viewBox="0 0 10.2 9.7"><path d="M5.1 0 L10.2 2.4 V3.3 H0 V2.4Z" fill="#f0fafc"/><rect x="1" y="3.9" width="1.6" height="4.2" fill="#f0fafc"/><rect x="3.6" y="3.9" width="1.4" height="4.2" fill="#f0fafc"/><rect x="5.4" y="3.9" width="1.4" height="4.2" fill="#f0fafc"/><rect x="7.6" y="3.9" width="1.6" height="4.2" fill="#f0fafc"/><rect x="0" y="8.4" width="10.2" height="1.3" fill="#f0fafc"/></svg>
<svg class="b" style="left:10.00px;top:347.00px;" width="14.00" height="11.00" viewBox="0 0 14 11"><path d="M1 7 L4.5 1.5 L7.2 3.4 L6.6 6.6 L3 8Z" fill="#f0fafc"/><path d="M6.4 3.4 L13.3 3.8 L11 6.5 L9.5 10.3 L7 7Z" fill="#f0fafc"/><path d="M5 5 L8 4.6" stroke="#1393b0" stroke-width="0.6"/></svg>
<svg class="b" style="left:9.75px;top:545.60px;" width="10.80" height="7.20" viewBox="0 0 10.8 7.2"><rect x="0" y="0" width="10.8" height="7.2" fill="#f0fafc"/><rect x="1.6" y="1.5" width="7.6" height="4.2" fill="#16a9c7"/><circle cx="5.4" cy="3.6" r="1.9" fill="#f0fafc"/><circle cx="5.4" cy="3.6" r="0.8" fill="#16a9c7"/></svg>
<svg class="b" style="left:10.00px;top:571.50px;" width="10.00" height="6.00" viewBox="0 0 10 6"><path d="M0 1.5 L2 0 H10 V6 H0Z" fill="#f0fafc"/></svg>
<svg class="b" style="left:110.00px;top:228.50px;" width="2.60" height="4.00" viewBox="0 0 2.6 4"><path d="M0.3 0.3 L2.2 2 L0.3 3.7" fill="none" stroke="#d5f1f7" stroke-width="1.1"/></svg>
<svg class="b" style="left:110.00px;top:268.50px;" width="2.60" height="4.00" viewBox="0 0 2.6 4"><path d="M0.3 0.3 L2.2 2 L0.3 3.7" fill="none" stroke="#d5f1f7" stroke-width="1.1"/></svg>
<svg class="b" style="left:110.00px;top:295.50px;" width="2.60" height="4.00" viewBox="0 0 2.6 4"><path d="M0.3 0.3 L2.2 2 L0.3 3.7" fill="none" stroke="#d5f1f7" stroke-width="1.1"/></svg>
<svg class="b" style="left:110.00px;top:322.50px;" width="2.60" height="4.00" viewBox="0 0 2.6 4"><path d="M0.3 0.3 L2.2 2 L0.3 3.7" fill="none" stroke="#d5f1f7" stroke-width="1.1"/></svg>
<svg class="b" style="left:110.00px;top:544.50px;" width="2.60" height="4.00" viewBox="0 0 2.6 4"><path d="M0.3 0.3 L2.2 2 L0.3 3.7" fill="none" stroke="#d5f1f7" stroke-width="1.1"/></svg>
<svg class="b" style="left:110.00px;top:570.50px;" width="2.60" height="4.00" viewBox="0 0 2.6 4"><path d="M0.3 0.3 L2.2 2 L0.3 3.7" fill="none" stroke="#d5f1f7" stroke-width="1.1"/></svg>
<svg class="b" style="left:108.50px;top:349.00px;" width="4.00" height="2.60" viewBox="0 0 4 2.6"><path d="M0.3 0.3 L2 2.2 L3.7 0.3" fill="none" stroke="#d5f1f7" stroke-width="1.1"/></svg>
<svg class="b" style="left:181.60px;top:99.30px;" width="3.60" height="2.90" viewBox="0 0 3.6 2.9"><path d="M0 0 H3.6 L1.8 2.9Z" fill="#666"/></svg>
<svg class="b" style="left:206.90px;top:98.30px;" width="9.20" height="6.60" viewBox="0 0 9.2 6.6"><path d="M0.2 3.3 C1.4 1.1 2.9 0.3 4.6 0.3 C6.3 0.3 7.8 1.1 9 3.3 C7.8 5.5 6.3 6.3 4.6 6.3 C2.9 6.3 1.4 5.5 0.2 3.3Z" fill="#6a6a6a"/><path d="M5.2 1.6 C6.6 2 7.3 2.6 7.8 3.3 C7.2 4.2 6.2 5 4.8 5.2Z" fill="#c8c8c8"/><path d="M1.6 3.3 C2.2 2.4 3 1.7 4.2 1.5 L2.8 4.8 C2.2 4.4 1.9 3.9 1.6 3.3Z" fill="#b0b0b0"/><path d="M6.4 0 L3.2 6.6" stroke="#333" stroke-width="1.3"/></svg>
<svg class="b" style="left:241.60px;top:97.20px;" width="8.60" height="8.20" viewBox="0 0 8.6 8.2"><path d="M1.2 3.4 A3.2 3.2 0 0 1 7 2.6" fill="none" stroke="#2d2d2d" stroke-width="1.5"/><path d="M8.3 0.4 V3.6 H5.1Z" fill="#2d2d2d"/><path d="M7.4 4.8 A3.2 3.2 0 0 1 1.6 5.6" fill="none" stroke="#2d2d2d" stroke-width="1.5"/><path d="M0.3 7.8 V4.6 H3.5Z" fill="#2d2d2d"/></svg>
<svg class="b" style="left:496.40px;top:99.80px;" width="3.20" height="2.50" viewBox="0 0 3.2 2.5"><path d="M0 0 H3.2 L1.6 2.5Z" fill="#707070"/></svg>
<svg class="b" style="left:634.80px;top:99.80px;" width="3.20" height="2.50" viewBox="0 0 3.2 2.5"><path d="M0 0 H3.2 L1.6 2.5Z" fill="#707070"/></svg>
<svg class="b" style="left:740.30px;top:99.80px;" width="3.20" height="2.50" viewBox="0 0 3.2 2.5"><path d="M0 0 H3.2 L1.6 2.5Z" fill="#707070"/></svg>
<svg class="b" style="left:846.20px;top:99.80px;" width="3.20" height="2.50" viewBox="0 0 3.2 2.5"><path d="M0 0 H3.2 L1.6 2.5Z" fill="#707070"/></svg>
<svg class="b" style="left:986.50px;top:95.50px;" width="9.50" height="9.50" viewBox="0 0 9.5 9.5"><circle cx="4" cy="4" r="3.2" fill="none" stroke="#a8a8a8" stroke-width="1.3"/><path d="M6.3 6.3 L9 9" stroke="#a8a8a8" stroke-width="1.5"/></svg>
<svg class="b" style="left:917.30px;top:57.00px;" width="7.80" height="7.80" viewBox="0 0 7.8 7.8"><circle cx="3.9" cy="3.9" r="3.9" fill="#2f2f2f"/><path d="M3.9 1.5V6.3M1.5 3.9H6.3" stroke="#fff" stroke-width="1.2"/></svg>
<svg class="b" style="left:209.80px;top:135.30px;" width="5.40" height="2.60" viewBox="0 0 5.4 2.6"><path d="M0 2.6 L2.7 0 L5.4 2.6Z" fill="#8a8a8a"/></svg>
<svg class="b" style="left:989.50px;top:543.50px;" width="11.00" height="9.00" viewBox="0 0 11 9"><path d="M0.3 3.5 C0.3 1.5 2.2 0.3 4.3 0.3 C6.4 0.3 8.3 1.5 8.3 3.5 C8.3 5.5 6.4 6.7 4.3 6.7 C3.6 6.7 3 6.6 2.5 6.4 L0.6 7.6 L1.2 5.6 C0.6 5 0.3 4.3 0.3 3.5Z" fill="#3b4550"/><path d="M8.8 3.6 C10 4.2 10.7 5 10.7 6 C10.7 6.7 10.4 7.3 9.9 7.8 L10.4 9 L8.8 8.3 C8.2 8.5 7.6 8.6 7 8.6 C5.7 8.6 4.7 8.2 4 7.5 C6.8 7.4 8.8 5.9 8.8 3.6Z" fill="#3b4550"/></svg>
<div class="b" style="left:0.00px;top:30.00px;width:1024.00px;height:3.00px;background:linear-gradient(rgba(0,30,40,0.09),rgba(0,30,40,0))"></div>
</body></html>
